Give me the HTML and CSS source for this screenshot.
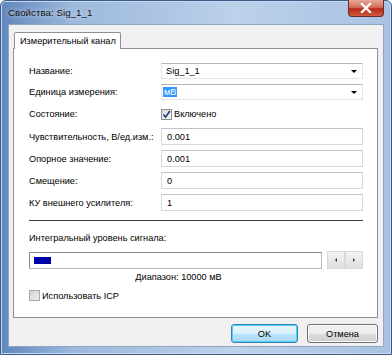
FILE: index.html
```html
<!DOCTYPE html>
<html lang="ru">
<head>
    <meta charset="UTF-8">
    <title>Свойства: Sig_1_1</title>
    <link rel="stylesheet" href="styles.css">
</head>
<body>
    <div class="window">
        <div class="titlebar">
            <span class="title">Свойства: Sig_1_1</span>
            <span class="close">
                <svg width="12" height="10" viewBox="0 0 12 10">
                    <path d="M2 1 L10 9 M10 1 L2 9" stroke="#fff" stroke-width="2.4" stroke-linecap="square"/>
                </svg>
            </span>
        </div>
        <div class="client">
            <div class="tabs">
                <span class="tab">Измерительный канал</span>
            </div>
            <div class="panel">
                <div class="form">
                    <span class="label">Название:</span>
                    <div class="combo"><span>Sig_1_1</span><i class="arrow"></i></div>

                    <span class="label">Единица измерения:</span>
                    <div class="combo"><span class="sel">мВ</span><i class="arrow"></i></div>

                    <span class="label">Состояние:</span>
                    <div class="check">
                        <span class="box checked">
                            <svg width="9" height="9" viewBox="0 0 9 9">
                                <path d="M1.5 4.5 L3.6 7.2 L7.8 1" fill="none" stroke="#2b3a68" stroke-width="1.6"/>
                            </svg>
                        </span>
                        Включено
                    </div>

                    <span class="label">Чувствительность, В/ед.изм.:</span>
                    <div class="field">0.001</div>

                    <span class="label">Опорное значение:</span>
                    <div class="field">0.001</div>

                    <span class="label">Смещение:</span>
                    <div class="field">0</div>

                    <span class="label">КУ внешнего усилителя:</span>
                    <div class="field">1</div>
                </div>

                <div class="sep"></div>

                <div class="level-label">Интегральный уровень сигнала:</div>
                <div class="level-row">
                    <div class="level-col">
                        <div class="meter"><div class="chunk"></div></div>
                        <div class="range">Диапазон: 10000 мВ</div>
                    </div>
                    <div class="spin">
                        <span class="spin-btn"><i class="tri-l"></i></span>
                        <span class="spin-btn"><i class="tri-r"></i></span>
                    </div>
                </div>

                <div class="check icp">
                    <span class="box"></span>
                    Использовать ICP
                </div>
            </div>
            <div class="buttons">
                <span class="btn default">OK</span>
                <span class="btn">Отмена</span>
            </div>
        </div>
    </div>
</body>
</html>
```

FILE: styles.css
```css
* {
    margin: 0;
    padding: 0;
    box-sizing: border-box;
}

body {
    background-color: #fff;
    font-family: "Liberation Sans", Arial, sans-serif;
    font-size: 9.2px;
    color: #000;
}

.window {
    display: flex;
    flex-direction: column;
    width: 392px;
    height: 355px;
    padding: 0 7px 7px 7px;
    background: linear-gradient(90deg, #5f86bb 0%, #9cb8dc 18%, #bcd1ea 60%, #a9c2e2 100%);
    border: 1px solid #3c5a87;
    border-radius: 6px 6px 0 0;
    box-shadow: inset 0 0 0 1px #c9daf0;
}

.titlebar {
    display: flex;
    align-items: flex-start;
    height: 23px;
}

.title {
    margin-top: 6px;
    font-size: 9.8px;
    color: #111;
    text-shadow: 0 0 4px #e8f0fa;
}

/* красная кнопка закрытия */
.close {
    display: flex;
    align-items: center;
    justify-content: center;
    margin-left: auto;
    width: 36px;
    height: 17px;
    margin-top: -1px;
    background: linear-gradient(#e9a99a 0%, #d2705e 45%, #b8281a 55%, #cf5b3f 100%);
    border: 1px solid #6d2b2b;
    border-top: 0;
    border-radius: 0 0 4px 4px;
}

.client {
    flex: 1;
    display: flex;
    flex-direction: column;
    padding: 7px 5px 0 4px;
    background-color: #f0f0f0;
    border: 1px solid #8ea5c4;
}

.tabs {
    display: flex;
    padding-left: 1px;
}

.tab {
    position: relative;
    z-index: 1;
    height: 17px;
    padding: 3px 4px 0 5px;
    margin-bottom: -1px;
    background-color: #fff;
    border: 1px solid #8e9097;
    border-bottom: 0;
    border-radius: 2px 2px 0 0;
}

.panel {
    height: 270px;
    padding: 14px 14px 0 15px;
    background-color: #fff;
    border: 1px solid #8e9097;
}

.form {
    display: grid;
    grid-template-columns: 132px 1fr;
    grid-template-rows: 16px 16px 18px 17px 17px 17px 17px;
    row-gap: 5px;
    align-items: center;
}

.label {
    line-height: 12px;
}

.combo,
.field {
    display: flex;
    align-items: center;
    height: 100%;
    padding-left: 4px;
    border: 1px solid #e2e3ea;
    border-top-color: #b4b6be;
    background-color: #fff;
}

.combo .sel {
    padding: 0 1px;
    margin-left: -3px;
    background-color: #3399ff;
    color: #fff;
}

.arrow {
    width: 0;
    height: 0;
    margin-left: auto;
    margin-right: 5px;
    border-left: 3px solid transparent;
    border-right: 3px solid transparent;
    border-top: 3px solid #000;
}

.field {
    padding-left: 5px;
    border-color: #d6d8de;
    border-top-color: #c2c4cb;
}

.check {
    display: flex;
    align-items: center;
    gap: 2px;
}

.box {
    display: flex;
    align-items: center;
    justify-content: center;
    width: 11px;
    height: 11px;
    border: 1px solid #8f8f8f;
    background: linear-gradient(135deg, #d8d8d8, #f6f6f6);
}

.box.checked {
    background: linear-gradient(135deg, #d6dbe6, #f2f4f8);
}

.sep {
    margin-top: 9px;
    height: 2px;
    border-top: 1px solid #3c3c3c;
    border-bottom: 1px solid #fff;
}

.level-label {
    margin-top: 10px;
    line-height: 12px;
}

.level-row {
    display: flex;
    gap: 5px;
    margin-top: 8px;
}

.level-col {
    width: 295px;
}

.meter {
    height: 17px;
    padding: 4px;
    border: 1px solid #8a8a8a;
    border-right-color: #b9b9b9;
    border-bottom-color: #b9b9b9;
    background-color: #fff;
}

.chunk {
    width: 17px;
    height: 7px;
    background-color: #0000a8;
}

.range {
    margin-top: 2px;
    padding-left: 6px;
    line-height: 12px;
    text-align: center;
}

.spin {
    display: flex;
}

.spin-btn {
    display: flex;
    align-items: center;
    justify-content: center;
    width: 18px;
    height: 18px;
    margin-top: -1px;
    border: 1px solid #d9d9d9;
    background: linear-gradient(#f4f4f4, #dedede);
}

.tri-l,
.tri-r {
    width: 0;
    height: 0;
    border-top: 2px solid transparent;
    border-bottom: 2px solid transparent;
}

.tri-l {
    border-right: 2px solid #333;
}

.tri-r {
    border-left: 2px solid #333;
}

.icp {
    margin-top: 7px;
}

.icp .box {
    border-color: #a8a8a8;
    background: linear-gradient(135deg, #d3d3d3, #eeeeee);
}

.buttons {
    display: flex;
    justify-content: flex-end;
    gap: 9px;
    margin-top: 6px;
}

.btn {
    display: flex;
    align-items: center;
    justify-content: center;
    width: 71px;
    height: 19px;
    border: 1px solid #707070;
    border-radius: 3px;
    background: linear-gradient(#f2f2f2 0%, #ebebeb 50%, #dddddd 51%, #cfcfcf 100%);
    box-shadow: inset 0 0 0 1px #fcfcfc;
}

.btn.default {
    width: 67px;
    border-color: #3c7fb1;
    background: linear-gradient(#eaf6fd 0%, #d9f0fc 50%, #bee6fd 51%, #a7d9f5 100%);
    box-shadow: inset 0 0 0 1px #48d3fb;
}
```
